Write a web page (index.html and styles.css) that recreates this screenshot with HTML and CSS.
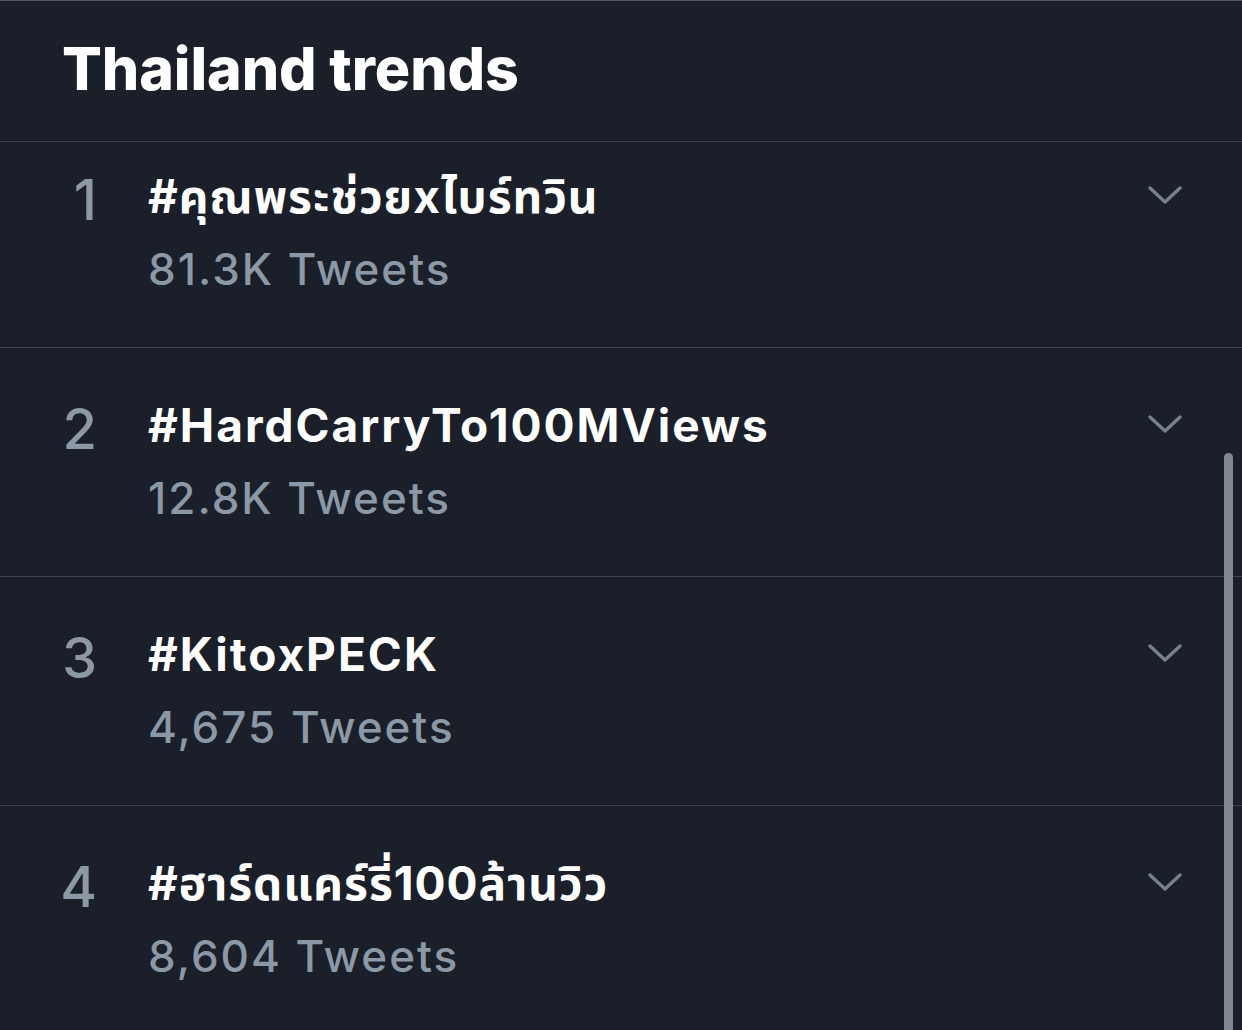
FILE: index.html
```html
<!DOCTYPE html>
<html lang="th">
<head>
<meta charset="utf-8">
<title>Thailand trends</title>
<link rel="stylesheet" href="styles.css">
</head>
<body>
<div class="panel">
  <header class="header">
    <h1 class="heading">Thailand trends</h1>
  </header>
  <ul class="trends">
    <li class="trend trend-first">
      <span class="rank">1</span>
      <div class="info">
        <div class="name name-th">#คุณพระช่วยxไบร์ทวิน</div>
        <div class="count">81.3K Tweets</div>
      </div>
      <svg class="chev" viewBox="0 0 34 18" width="34" height="18" aria-hidden="true"><path d="M2 2 L17 16 L32 2" fill="none" stroke="currentColor" stroke-width="3.4" stroke-linecap="round" stroke-linejoin="round"/></svg>
    </li>
    <li class="trend">
      <span class="rank">2</span>
      <div class="info">
        <div class="name">#HardCarryTo100MViews</div>
        <div class="count">12.8K Tweets</div>
      </div>
      <svg class="chev" viewBox="0 0 34 18" width="34" height="18" aria-hidden="true"><path d="M2 2 L17 16 L32 2" fill="none" stroke="currentColor" stroke-width="3.4" stroke-linecap="round" stroke-linejoin="round"/></svg>
    </li>
    <li class="trend">
      <span class="rank">3</span>
      <div class="info">
        <div class="name">#KitoxPECK</div>
        <div class="count">4,675 Tweets</div>
      </div>
      <svg class="chev" viewBox="0 0 34 18" width="34" height="18" aria-hidden="true"><path d="M2 2 L17 16 L32 2" fill="none" stroke="currentColor" stroke-width="3.4" stroke-linecap="round" stroke-linejoin="round"/></svg>
    </li>
    <li class="trend">
      <span class="rank">4</span>
      <div class="info">
        <div class="name name-th">#ฮาร์ดแคร์รี่100ล้านวิว</div>
        <div class="count">8,604 Tweets</div>
      </div>
      <svg class="chev" viewBox="0 0 34 18" width="34" height="18" aria-hidden="true"><path d="M2 2 L17 16 L32 2" fill="none" stroke="currentColor" stroke-width="3.4" stroke-linecap="round" stroke-linejoin="round"/></svg>
    </li>
  </ul>
  <div class="scrollbar"></div>
</div>
</body>
</html>
```
FILE: styles.css
```css
html, body {
  margin: 0;
  padding: 0;
  background: #1a1f29;
}
body {
  font-family: Inter, "Noto Sans Thai", "Noto Sans", "DejaVu Sans", sans-serif;
  color: #ffffff;
  overflow: hidden;
}
.panel {
  position: relative;
  width: 1242px;
  height: 1030px;
  overflow: hidden;
  border-top: 1px solid #555b64;
  box-sizing: border-box;
}
.header {
  padding: 32px 0 36px 62px;
  border-bottom: 1px solid #3a414b;
}
.heading {
  margin: 0;
  font-size: 59px;
  font-weight: 800;
  line-height: 72px;
  letter-spacing: -0.1px;
}
.trends {
  list-style: none;
  margin: 0;
  padding: 0;
}
.trend {
  display: flex;
  align-items: flex-start;
  padding: 47px 60px 48px 0;
  border-bottom: 1px solid #3a414b;
}
.trend-first {
  padding-top: 24px;
}
.rank {
  width: 97px;
  margin-right: 51px;
  text-align: right;
  font-size: 56px;
  font-weight: 500;
  line-height: 60px;
  margin-top: 4px;
  color: #8b98a5;
}
.info {
  flex: 1;
}
.name {
  font-size: 46px;
  font-weight: 700;
  line-height: 60px;
  letter-spacing: 2px;
}
.name-th {
  letter-spacing: 1px;
}
.count {
  margin-top: 13px;
  font-size: 44px;
  font-weight: 500;
  line-height: 60px;
  letter-spacing: 2px;
  color: #8b98a5;
}
.chev {
  margin-top: 20px;
  color: #75818d;
  flex: none;
}
.scrollbar {
  position: absolute;
  left: 1224px;
  top: 452px;
  width: 9px;
  height: 600px;
  border-radius: 5px;
  background: #7f8790;
}
```
